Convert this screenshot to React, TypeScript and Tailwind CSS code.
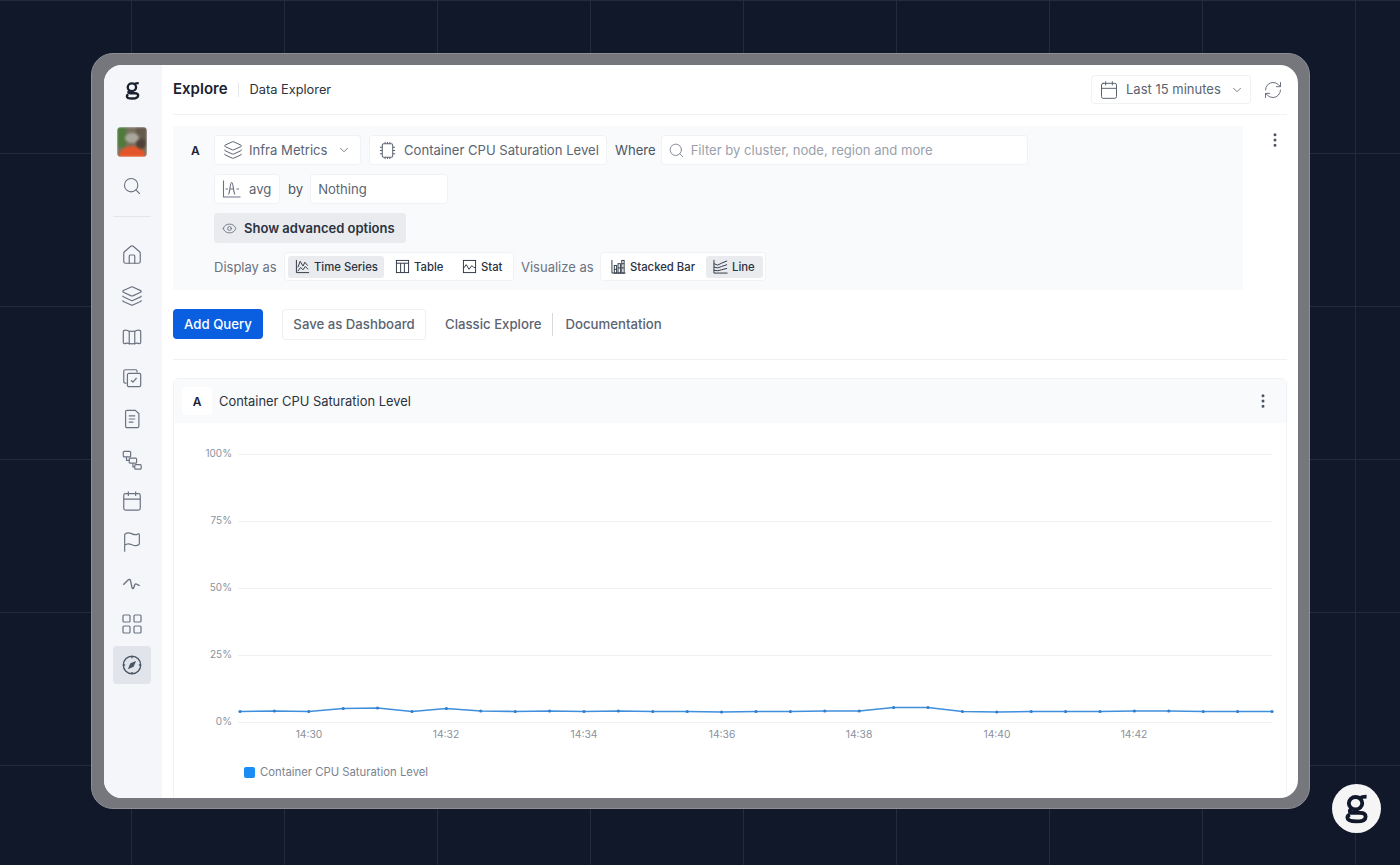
import {
  Calendar,
  ChevronDown,
  EllipsisVertical,
  Eye,
  Flag,
  House,
  Layers,
  LayoutGrid,
  RefreshCw,
  Search,
} from "lucide-react";
import type { ReactNode } from "react";

// brand mark, double-storey g
const Logo = ({ className }: { className: string }) => (
  <svg viewBox="0 0 24 32" fill="none" stroke="currentColor" strokeWidth="4" className={className}>
    <ellipse cx="11" cy="10.5" rx="7" ry="6.5" />
    <path d="M15 5.5 C17 4 19 3.6 22.5 3.6" />
    <path d="M7 16.5 C4 18 4.5 20.6 8 20.6 H16 C20.5 20.6 21.5 22.6 21.5 24.5 C21.5 27.5 18.5 29.5 12 29.5 C5.5 29.5 2.5 28 2.5 25.5 C2.5 24 3.5 23 5 22.2" />
  </svg>
);

const navIcon = "h-[22px] w-[22px]";

const BookMap = () => (
  <svg viewBox="0 0 24 24" fill="none" stroke="currentColor" strokeWidth="1.3" className={navIcon}>
    <path d="M2.5 6.5C2.5 5 3.5 4.5 5 4.5c1.5 0 3 .5 4 1.5 1-.5 2-.5 3 0 1-.5 2-.5 3 0 1-1 2.500-1.500 4-1.500 1.500 0 2.500.5 2.500 2v11c0 1.500-1 2-2.500 1.500-1.500-.5-3-.5-4 .5-1-.5-2-.5-3 0-1-.5-2-.5-3 0-1-1-2.500-1-4-.5-1.500.5-2.500 0-2.500-1.500z" />
    <path d="M9 6v14M15 6v14" />
  </svg>
);

const CopyCheck = () => (
  <svg viewBox="0 0 24 24" fill="none" stroke="currentColor" strokeWidth="1.3" className={navIcon}>
    <path d="M6 17.500H4.500A1.500 1.500 0 0 1 3 16V4.500A1.500 1.500 0 0 1 4.500 3H16a1.500 1.500 0 0 1 1.500 1.500V6" />
    <rect x="7" y="7" width="14.500" height="14.500" rx="1.500" />
    <path d="m11 14.500 2 2 4-4.500" />
  </svg>
);

const DocLines = () => (
  <svg viewBox="0 0 24 24" fill="none" stroke="currentColor" strokeWidth="1.3" className={navIcon}>
    <path d="M5 4a1.500 1.500 0 0 1 1.500-1.500h9L19.500 6v14a1.500 1.500 0 0 1-1.500 1.500H6.500A1.500 1.500 0 0 1 5 20z" />
    <path d="M8.500 8.500h7M8.500 12h7M8.500 15.500h5" />
  </svg>
);

const Flow = () => (
  <svg viewBox="0 0 24 24" fill="none" stroke="currentColor" strokeWidth="1.3" className={navIcon}>
    <rect x="2.500" y="2.500" width="8" height="6" rx="1" />
    <rect x="9" y="10" width="8" height="5.500" rx="1" />
    <rect x="15" y="17" width="7" height="5" rx="1" />
    <path d="M6 8.500V12.500H9M13 15.500V19.500H15" />
  </svg>
);

const Pulse = () => (
  <svg viewBox="0 0 24 24" fill="none" stroke="currentColor" strokeWidth="1.5" className={navIcon}>
    <path d="M2.500 14 8 8.500c1-1 2-.5 2.500 1.500l1.500 7c.5 1.500 1.500 1.500 2 0l1-3c.5-1.200 1.500-1.500 2.500-.5l3 1.500" />
  </svg>
);

const CompassMark = () => (
  <svg viewBox="0 0 24 24" fill="none" stroke="currentColor" strokeWidth="1.5" className={navIcon}>
    <circle cx="12" cy="12" r="9.500" />
    <path d="M12 2.500v2M12 19.500v2M2.500 12h2M19.500 12h2" />
    <path d="M16.500 7.500 13.800 13.800 7.500 16.500l2.700-6.300z" fill="currentColor" stroke="none" />
  </svg>
);

const Chip = () => (
  <svg viewBox="0 0 20 20" fill="none" stroke="currentColor" strokeWidth="1.1" className="h-[19px] w-[19px]">
    <rect x="4.500" y="3" width="11" height="14" rx="1.500" />
    <path d="M7.500 1v2M10 1v2M12.500 1v2M7.500 17v2M10 17v2M12.500 17v2M2 6.500h2.500M2 10h2.500M2 13.500h2.500M15.500 6.500H18M15.500 10H18M15.500 13.500H18" />
  </svg>
);

const AvgIcon = () => (
  <svg viewBox="0 0 20 20" fill="none" stroke="currentColor" strokeWidth="1.1" className="h-[20px] w-[20px] text-gray-500">
    <path d="M1.500 1.500v16.500h17" />
    <path d="M3.500 10h2.500M14.500 10h2.500" />
    <path d="M6.500 15.500c1.500-2 1.500-12 3.200-12s1.600 10 3.300 12M7.500 10h4.500" />
  </svg>
);

const TimeSeriesIcon = () => (
  <svg viewBox="0 0 16 16" fill="none" stroke="currentColor" strokeWidth="1" className="h-[15px] w-[15px]">
    <path d="M1.500 1v13.500H15" />
    <path d="M3 9l2.500-6.500 3 5 2-4 3 3.500M3 13l3-4 2.500 2.500L11 8l3 3" />
  </svg>
);

const TableIcon = () => (
  <svg viewBox="0 0 16 16" fill="none" stroke="currentColor" strokeWidth="1" className="h-[15px] w-[15px]">
    <rect x="1.500" y="1.500" width="13" height="13" />
    <path d="M1.500 4.500h13M6 4.500v10M10 4.500v10" />
  </svg>
);

const StatIcon = () => (
  <svg viewBox="0 0 16 16" fill="none" stroke="currentColor" strokeWidth="1" className="h-[15px] w-[15px]">
    <rect x="1.500" y="1.500" width="13" height="13" />
    <path d="M1.500 10l3-4 3 5 3-4 2 2h2" />
  </svg>
);

const StackedIcon = () => (
  <svg viewBox="0 0 16 16" fill="none" stroke="currentColor" strokeWidth="1" className="h-[15px] w-[15px]">
    <path d="M1 1v14h14.500" />
    <rect x="3.500" y="7" width="2.500" height="8" />
    <rect x="7.500" y="5" width="2.500" height="10" />
    <rect x="11.500" y="1.500" width="2.500" height="13.500" />
    <path d="M3.500 11h2.500M7.500 9.500H10M11.500 5H14M11.500 9.500H14" />
  </svg>
);

const LineAreaIcon = () => (
  <svg viewBox="0 0 16 16" fill="none" stroke="currentColor" strokeWidth="1" className="h-[15px] w-[15px]">
    <path d="M1 1v14h14.500" />
    <path d="M1 5l4 1.500 4-2 6-2.500M1 8.500l4 1 4-1.500 6-2M1 12l4 .5 4-1 6-1.500" />
  </svg>
);

const navIcons: ReactNode[] = [
  <House className={navIcon} strokeWidth={1.3} />,
  <Layers className={navIcon} strokeWidth={1.3} />,
  <BookMap />,
  <CopyCheck />,
  <DocLines />,
  <Flow />,
  <Calendar className={navIcon} strokeWidth={1.3} />,
  <Flag className={navIcon} strokeWidth={1.3} />,
  <Pulse />,
  <LayoutGrid className="h-[24px] w-[24px]" strokeWidth={1.2} />,
];

// chart values as pixel heights above the zero line
const series = [
  10.5, 11, 10.5, 13.5, 14, 10.5, 13.5, 11, 10.5, 11, 10.5, 11, 10.5, 10.5, 10, 10.5,
  10.5, 11, 11, 14.5, 14.5, 10.5, 10, 10.5, 10.5, 10.5, 11, 11, 10.5, 10.5, 10.5,
];
const zeroY = 722;
const points = series.map((v, i) => [240 + i * 34.4, zeroY - v]);
const yTicks = [
  ["100%", 454],
  ["75%", 521],
  ["50%", 588],
  ["25%", 655],
  ["0%", 722],
] as const;
const xTicks = [
  ["14:30", 309],
  ["14:32", 446],
  ["14:34", 584],
  ["14:36", 722],
  ["14:38", 859],
  ["14:40", 997],
  ["14:42", 1134],
] as const;

const Box = ({ className, children }: { className: string; children: ReactNode }) => (
  <div className={`flex items-center rounded-[4px] bg-white shadow-[inset_0_0_0_1px_#f1f2f5] ${className}`}>
    {children}
  </div>
);

const Tab = ({ active, icon, label, className }: { active?: boolean; icon: ReactNode; label: string; className: string }) => (
  <div
    className={`flex h-[22px] items-center gap-[4px] rounded-[3px] text-[11.3px] font-medium text-[#2b3240] ${
      active ? "bg-[#e9ebef]" : ""
    } ${className}`}
  >
    {icon}
    <span className="pt-[2px]">{label}</span>
  </div>
);

export default function App() {
  return (
    <div className="relative h-[865px] w-[1400px] overflow-hidden bg-[#10182a] bg-[linear-gradient(#232b3c_1px,transparent_1px),linear-gradient(90deg,#232b3c_1px,transparent_1px)] bg-[size:153px_153px] bg-[position:131px_0] pl-[91px] pt-[53px] font-['Inter',sans-serif]">
      {/* grey frame */}
      <div className="h-[756px] w-[1219px] rounded-[22px] border border-[#8d8f95] bg-[#75777d] pl-[12px] pt-[11px]">
        <div className="flex h-[733px] w-[1194px] overflow-hidden rounded-[18px] bg-white">
          {/* sidebar */}
          <aside className="flex w-[58px] flex-col items-center bg-[#f4f6fa] pr-[2px] text-[#6b7280]">
            <div className="flex h-[50px] items-center">
              <Logo className="h-[19px] w-[15px] text-[#1a2130]" />
            </div>
            <div className="mt-[12px] h-[30px] w-[30px] overflow-hidden rounded-[4px]">
              <svg viewBox="0 0 30 30" className="h-[30px] w-[30px] blur-[1px]">
                <rect width="30" height="30" fill="#77705c" />
                <rect x="-2" y="-2" width="11" height="22" fill="#4f7a3c" />
                <rect x="19" y="-2" width="13" height="18" fill="#665a4c" />
                <ellipse cx="15" cy="11" rx="7" ry="5" fill="#a9a69c" />
                <ellipse cx="15" cy="29" rx="13" ry="10" fill="#e4562a" />
                <ellipse cx="24" cy="17" rx="5" ry="5" fill="#4f4238" />
              </svg>
            </div>
            <div className="mt-[19px] flex h-[20px] items-center">
              <Search className="h-[20px] w-[20px]" strokeWidth={1.3} />
            </div>
            <div className="mt-[20px] h-px w-[38px] bg-[#e2e5ea]" />
            <div className="mt-[19px] flex flex-col gap-[3px]">
              {navIcons.map((icon, i) => (
                <div key={i} className="flex h-[38px] w-[38px] items-center justify-center">
                  {icon}
                </div>
              ))}
              <div className="flex h-[38px] w-[38px] items-center justify-center rounded-[4px] bg-[#e1e5eb] text-[#4b5563]">
                <CompassMark />
              </div>
            </div>
          </aside>

          {/* main */}
          <main className="flex min-w-0 flex-1 flex-col px-[11px]">
            <header className="flex h-[50px] shrink-0 items-center border-b border-[#f1f2f5]">
              <span className="text-[15px] font-semibold text-[#1a2130]">Explore</span>
              <div className="ml-[10px] h-[14px] w-px bg-[#e5e7eb]" />
              <span className="ml-[11px] text-[12.8px] text-[#2b3240]">Data Explorer</span>
              <div className="ml-auto flex h-[29px] w-[160px] items-center rounded-[4px] pl-[8px] text-[13px] text-[#5b6472] shadow-[inset_0_0_0_1px_#f1f2f5]">
                <Calendar className="h-[20px] w-[20px]" strokeWidth={1.2} />
                <span className="ml-[7px]">Last 15 minutes</span>
                <ChevronDown className="ml-[9px] h-[14px] w-[14px]" strokeWidth={1.4} />
              </div>
              <RefreshCw className="ml-[12px] mr-[4px] h-[20px] w-[20px] text-[#6b7280]" strokeWidth={1.2} />
            </header>

            <div className="mt-[11px] flex shrink-0">
              {/* query builder */}
              <div className="flex h-[164px] w-[1070px] bg-[#f9fafc] pt-[9px]">
                <span className="ml-[18px] mt-[7px] w-[23px] text-[12px] font-semibold text-[#1a2130]">A</span>
                <div className="flex flex-col">
                  <div className="flex items-center text-[13.1px] text-[#5b6472]">
                    <Box className="h-[30px] w-[147px] pl-[9px]">
                      <Layers className="h-[20px] w-[20px]" strokeWidth={1.2} />
                      <span className="ml-[6px] pt-[2px]">Infra Metrics</span>
                      <ChevronDown className="ml-[9px] h-[14px] w-[14px]" strokeWidth={1.4} />
                    </Box>
                    <Box className="ml-[8px] h-[30px] w-[238px] pl-[9px]">
                      <Chip />
                      <span className="ml-[7px] whitespace-nowrap pt-[2px]">Container CPU Saturation Level</span>
                    </Box>
                    <span className="ml-[8px] pt-[2px] text-[#4b5563]">Where</span>
                    <Box className="ml-[5px] h-[30px] w-[367px] pl-[7px]">
                      <Search className="h-[17px] w-[17px] text-[#7b8390]" strokeWidth={1.3} />
                      <span className="ml-[6px] pt-[2px] text-[#9aa1ad]">Filter by cluster, node, region and more</span>
                    </Box>
                  </div>
                  <div className="mt-[9px] flex items-center text-[13.1px] text-[#5b6472]">
                    <Box className="h-[30px] w-[66px] pl-[8px]">
                      <AvgIcon />
                      <span className="ml-[7px] pt-[2px]">avg</span>
                    </Box>
                    <span className="ml-[8px] pt-[2px] text-[#4b5563]">by</span>
                    <Box className="ml-[7px] h-[30px] w-[138px] pl-[8px]">
                      <span className="pt-[2px]">Nothing</span>
                    </Box>
                  </div>
                  <div className="mt-[9px] flex h-[30px] w-[192px] items-center rounded-[4px] bg-[#e9ebef] pl-[8px] text-[13px] font-semibold text-[#2b3240]">
                    <Eye className="h-[15px] w-[15px] text-[#5b6472]" strokeWidth={1.3} />
                    <span className="ml-[7px] whitespace-nowrap pt-[2px]">Show advanced options</span>
                  </div>
                  <div className="mt-[9px] flex items-center text-[13px] text-[#6b7280]">
                    <span className="w-[70px] whitespace-nowrap pt-[2px]">Display as</span>
                    <Box className="h-[29px] w-[230px] pl-[4px]">
                      <Tab active icon={<TimeSeriesIcon />} label="Time Series" className="w-[96px] pl-[7px]" />
                      <Tab icon={<TableIcon />} label="Table" className="ml-[4px] w-[62px] pl-[7px]" />
                      <Tab icon={<StatIcon />} label="Stat" className="w-[56px] pl-[12px]" />
                    </Box>
                    <span className="ml-[7px] w-[79px] whitespace-nowrap pt-[2px]">Visualize as</span>
                    <Box className="h-[29px] w-[166px] pl-[4px]">
                      <Tab icon={<StackedIcon />} label="Stacked Bar" className="w-[102px] pl-[7px]" />
                      <Tab active icon={<LineAreaIcon />} label="Line" className="w-[57px] pl-[7px]" />
                    </Box>
                  </div>
                </div>
              </div>
              <EllipsisVertical className="ml-[23px] mt-[5px] h-[18px] w-[18px] text-[#4b5563]" strokeWidth={2} />
            </div>

            {/* actions */}
            <div className="mt-[18px] flex h-[32px] shrink-0 items-center text-[13.2px] font-medium text-[#5b6472]">
              <div className="flex h-[30px] w-[90px] items-center justify-center rounded-[4px] bg-[#0a5fe0] pt-[2px] text-white">Add Query</div>
              <div className="ml-[19px] flex h-[31px] w-[144px] items-center justify-center rounded-[4px] pt-[2px] shadow-[inset_0_0_0_1px_#eff0f3]">Save as Dashboard</div>
              <span className="ml-[19px] pt-[2px]">Classic Explore</span>
              <div className="ml-[11px] h-[23px] w-px bg-[#d6d9de]" />
              <span className="ml-[12px] pt-[2px]">Documentation</span>
            </div>
            <div className="mt-[19px] h-px shrink-0 bg-[#f0f1f4]" />

            {/* chart card */}
            <section className="mt-[18px] flex min-h-0 flex-1 flex-col rounded-t-[6px] border border-b-0 border-[#f0f1f4]">
              <div className="flex h-[44px] shrink-0 items-center bg-[#f9fafc] pl-[8px] pr-[14px]">
                <div className="flex h-[28px] w-[30px] items-center justify-center rounded-[4px] bg-white pt-[2px] text-[12px] font-semibold text-[#1a2130]">A</div>
                <span className="ml-[7px] pt-[2px] text-[12.9px] text-[#2b3240]">Container CPU Saturation Level</span>
                <EllipsisVertical className="ml-auto h-[18px] w-[18px] text-[#4b5563]" strokeWidth={2} />
              </div>
              <svg viewBox="174 423 1112 338" className="h-[338px] w-[1112px] shrink-0 font-['Inter',sans-serif]">
                {yTicks.map(([label, y]) => (
                  <g key={label}>
                    <line x1="238" x2="1272" y1={y + 0.5} y2={y + 0.5} stroke="#f0f1f4" />
                    <text x="232" y={y + 2.5} textAnchor="end" fontSize="10" fill="#8a919d">
                      {label}
                    </text>
                  </g>
                ))}
                {xTicks.map(([label, x]) => (
                  <text key={label} x={x} y="738" textAnchor="middle" fontSize="10.3" fill="#8a919d">
                    {label}
                  </text>
                ))}
                <polyline points={points.map((p) => p.join(",")).join(" ")} fill="none" stroke="#3f8fdc" strokeWidth="1.6" />
                {points.map(([x, y]) => (
                  <circle key={x} cx={x} cy={y} r="1.6" fill="#2f7fcf" />
                ))}
              </svg>
              <div className="ml-[70px] mt-[3px] flex items-center text-[11.3px] text-[#7b8390]">
                <div className="h-[11px] w-[11px] rounded-[2px] bg-[#1a8cf5]" />
                <span className="ml-[5px]">Container CPU Saturation Level</span>
              </div>
            </section>
          </main>
        </div>
      </div>

      {/* floating brand badge */}
      <div className="absolute left-[1332px] top-[784px] flex h-[49px] w-[49px] items-center justify-center rounded-full bg-[#f5f5f5]">
        <Logo className="h-[31px] w-[23px] text-[#10182a]" />
      </div>
    </div>
  );
}
